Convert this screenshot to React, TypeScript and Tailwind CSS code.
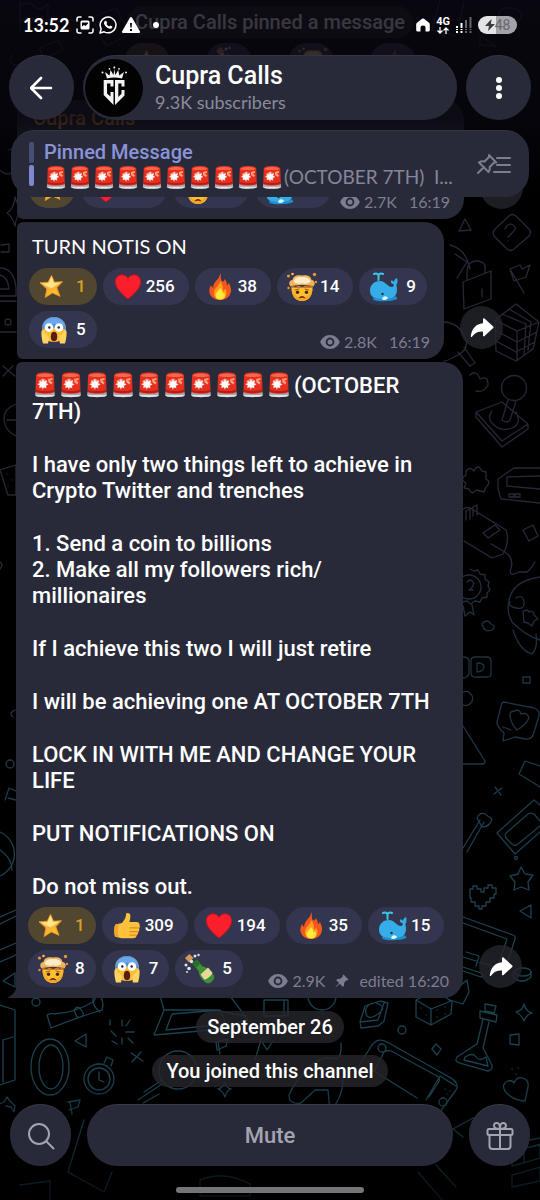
import type { ReactNode } from 'react';

type EmojiName =
  | 'star'
  | 'heart'
  | 'fire'
  | 'mindblown'
  | 'whale'
  | 'scream'
  | 'thumb'
  | 'bottle';

const emojiArt: Record<EmojiName, ReactNode> = {
  star: (
    <>
      <path
        d="M11.5 2.5l3 6.8 8-.6-5.7 6 3.2 8.6-7.6-3.4-7.2 4.6 1.7-8.6L0 9.8l8.2-.6z"
        fill="#f9b233"
        stroke="#e8962a"
        strokeWidth="1"
        strokeLinejoin="round"
      />
      <path d="M11.5 3.5l2.4 6.3 6.6-.2-9 5.6-4.2-1.6-5.6-3.1 6.8-.5z" fill="#ffe58a" />
      <path d="M5.5 22.5l9.5-6.3 3.6 5.8-6.2-3.2z" fill="#ffc21f" />
    </>
  ),
  heart: (
    <path
      d="M14 26C9 22 2 16 1.300 9.500 1 4.500 4.500 1.800 8 1.800c2.600 0 4.800 1.300 6 3.600 1.200-2.300 3.400-3.600 6-3.600 3.500 0 7 2.700 6.700 7.700C26 16 19 22 14 26z"
      fill="#fb1f2b"
      stroke="#c60f22"
      strokeWidth="1"
    />
  ),
  fire: (
    <>
      <path
        d="M14.500 0c1 4-.5 6 1.500 8 1 1 2.500.5 2.500-2 2 2 2.500 4 2.300 6.200 1.200-.3 1.800-1.400 1.900-2.700C25 14 26 17.500 24 21.500c-2 4-6 5.500-10 5.500S5.500 25 4 21c-1.500-4 0-7 1.200-9 .3 1.500.8 2.400 2 2.800C7 8.500 13.500 6.500 14.500 0z"
        fill="#f4561d"
      />
      <path
        d="M14 8c0 4-5 6-6 11-.8 4.500 2.500 7.500 6 7.500s6.500-2.500 6.500-6.500c0-2-.8-3.500-1.500-4.500-.5 1.500-1 2-2 2.200C17.500 14 16 10 14 8z"
        fill="#ff9d1c"
      />
      <path
        d="M14 15c-1 3-4.500 4-4.500 7.500 0 2.500 2 4 4.700 4s4.800-1.500 4.800-4c0-1.500-.7-2.700-1.200-3.300-.2.800-.6 1.200-1.200 1.300.2-2-1.200-4.300-2.600-5.500z"
        fill="#ffe93b"
      />
    </>
  ),
  mindblown: (
    <>
      <path d="M3.500 14c0 9 4 14 10.500 14s10.500-5 10.500-14z" fill="#fcbf2d" />
      <path d="M3.500 15c0 8 4 13 10.500 13s10.500-5 10.500-13c-2 6-6 10-10.500 10S5.500 21 3.500 15z" fill="#f5a727" />
      <path
        d="M2.500 13.500c-3-4 0-6.500 2-6.500C5 3 9 1.500 14 2.500c5-1 9 .5 9.500 4.500 2 0 5 2.500 2 6.500-5-2-18-2-23 0z"
        fill="#f0b45c"
      />
      <path d="M5.500 8c1-3.500 5-4.500 8.500-4 3.500-.5 7.500.5 8.500 4-1 3-4 2-5.500 3-2-1-4-1-6 0-1.500-1-4.500 0-5.500-3z" fill="#fdebc8" />
      <path d="M3.500 12.500l4 1.500 3-1.500 3.500 1.500 4-1.500 3 1 3.500-1V15h-21z" fill="#cc7a2c" />
      <path d="M7 17l4-1M21 17l-4-1" stroke="#a85c1c" strokeWidth="1" strokeLinecap="round" />
      <circle cx="9.500" cy="19.200" r="1.700" fill="#4a2412" />
      <circle cx="18.500" cy="19.200" r="1.700" fill="#4a2412" />
      <path d="M10.500 25.500c1-3.500 6-3.500 7 0-2-1-5-1-7 0z" fill="#6a2b16" />
      <circle cx="0.500" cy="3" r="1.600" fill="#f0922e" />
      <circle cx="4.500" cy="1" r="1.300" fill="#ffc042" />
      <circle cx="26.500" cy="1.500" r="1.700" fill="#f0922e" />
      <circle cx="28" cy="9" r="1.200" fill="#f0922e" />
      <circle cx="0.500" cy="15" r="1.200" fill="#f0922e" />
    </>
  ),
  whale: (
    <>
      <path
        d="M0 18C0 11 5 8 10 8c6 0 7 6 12 6 1.500 0 2-1.500 1.500-3-2-.2-3-1.500-2.500-3.500 1.500 0 2.500.5 3 1.500.2-2 1.500-3.500 3-4 1 3 .5 5.500-.7 7C29 21 24 27 15 27 6 27 0 24 0 18z"
        fill="#35ade6"
      />
      <path d="M3 24c6 3 18 3 23-1l1.500 3c-6 2.500-18 3-24 1z" fill="#1d8fd0" />
      <path d="M12 26.500c1-4 4-4 6-1.500-1 2-4 2.500-6 1.500z" fill="#e8f7ff" />
      <circle cx="12.500" cy="21" r="1.200" fill="#12354d" />
      <path
        d="M8.500 7V3M8.500 3C8.500 .5 6 0 4 1M8.500 3C8.500 .5 11 0 13 1"
        fill="none"
        stroke="#3bc6e8"
        strokeWidth="2"
        strokeLinecap="round"
      />
    </>
  ),
  scream: (
    <>
      <path d="M2 14C2 6 7 1 14 1s12 5 12 13c0 8-5 12-12 12S2 22 2 14z" fill="#fbbf36" />
      <path d="M2 14C2 6 7 1 14 1s12 5 12 13c-3-3-21-3-24 0z" fill="#4e8fe0" />
      <path d="M2.500 11C4 5 8 2 14 2s10 3 11.500 9c-3-4-20-4-23 0z" fill="#6aa8ee" />
      <circle cx="9" cy="11.500" r="4.300" fill="#fff" />
      <circle cx="19" cy="11.500" r="4.300" fill="#fff" />
      <circle cx="9.300" cy="11.500" r="1.200" fill="#33241d" />
      <circle cx="18.700" cy="11.500" r="1.200" fill="#33241d" />
      <ellipse cx="14" cy="20.500" rx="3.200" ry="4.700" fill="#5b1d12" />
      <path d="M1.500 15c2-1 3 0 3.500 3 2 0 4 2 4 5l-1 4.500H3C2 24 1 19 1.500 15z" fill="#ffd262" />
      <path
        d="M26.500 15c-2-1-3 0-3.500 3-2 0-4 2-4 5l1 4.500h5c1-3.500 2-8.500 1.500-12.500z"
        fill="#ffd262"
      />
    </>
  ),
  thumb: (
    <>
      <path
        d="M14.500 1c2.500 0 3.300 2 2.800 4.500L16.500 10h7c2 0 3.300 1.300 3 3 .5 1 .5 2.500-.3 3.500.3 1.300 0 2.700-1 3.500.1 1.200-.4 2.400-1.400 3-.1 2-1.500 3.300-3.800 3.300H8.500L2 24.500C1 20 1 15 2.500 12.500L9 11c2-3 4-5 4-8.500 0-1 .5-1.500 1.500-1.500z"
        fill="#fdc23c"
      />
      <path
        d="M17 15.800h8.500M17 19.700h7.800M17 23.200h6"
        stroke="#dd8e22"
        strokeWidth="1.200"
        strokeLinecap="round"
      />
      <path d="M2 24.500C1 20 1 15 2.500 12.500L6 11.700c-1.500 4-1.500 9.500 0 13.900z" fill="#f2a52b" />
    </>
  ),
  bottle: (
    <>
      <path d="M7 9l4.500-4 4.500 6c4 1 8 4 11 8 2 3 1.500 5-1 7.500s-5 2.500-7 .5c-4-3-6-7-6.500-11z" fill="#3f8f35" />
      <path d="M6 8.500L11 4l3.500 4.500-5 4.500z" fill="#2a6d2b" />
      <path d="M14.500 19.500l7.500-7 4.500 5.200c-1 3-4 5.500-8 7z" fill="#e6d79a" />
      <path d="M-1 3L3.500-1l4 4L3 7.500z" fill="#d79a56" />
      <g fill="#dfe4ea">
        <circle cx="9" cy="1" r="1.500" />
        <circle cx="12.500" cy="0" r="1.200" />
        <circle cx="0" cy="10" r="1.500" />
        <circle cx="3" cy="13.500" r="1.800" />
        <circle cx="1" cy="17" r="1" />
        <circle cx="5.500" cy="6.500" r="1.700" />
      </g>
    </>
  ),
};

const Emoji = ({ name }: { name: EmojiName }) => (
  <svg viewBox="0 0 28 28" className="h-7 w-7 shrink-0 overflow-visible" aria-hidden="true">
    {emojiArt[name]}
  </svg>
);

const Siren = ({ className }: { className: string }) => (
  <svg viewBox="0 0 26 26" className={`inline-block shrink-0 ${className}`} aria-hidden="true">
    <path d="M3.500 20h19l.500 3.200c0 2.500-19.900 2.500-20 0z" fill="#a3a8ad" />
    <path d="M4 23h18v1c-3 1.500-15 1.500-18 0z" fill="#dfe1e2" />
    <path d="M4 4c0-2 2-3.500 9-3.500S22 2 22 4l.5 15.500c0 3-19 3-19 0z" fill="#e5301f" />
    <path d="M5 4c0-1.500 4-2.500 8-2.500S21 2.500 21 4c-3 1.300-13 1.300-16 0z" fill="#f4674c" />
    <path d="M16 7l4.500-1v2l-2.500.5 2.500 2-1 2-3-2z" fill="#ffa184" />
    <path d="M4 17.500c4 2 14 2 18 0v2c-3 2-15 2-18 0z" fill="#bb1a18" />
    <circle cx="11" cy="11.500" r="4.500" fill="#ff9a8a" opacity="0.800" />
    <path
      d="M11 6l.900 3.700 3.300-1.500-1.500 3 3 1.200-3.200 1 1 3-2.700-1.500-.9 2.800-1-2.800-2.900 1.200 1.200-2.800-3-1.100 3-.9-1.100-2.700 2.800 1.300z"
      fill="#fff"
    />
  </svg>
);

const Sirens = ({ className }: { className: string }) => (
  <>
    {Array.from({ length: 10 }, (_, i) => (
      <Siren key={i} className={className} />
    ))}
  </>
);

const EyeIcon = () => (
  <svg viewBox="0 0 20 14" className="h-3.5 w-5 shrink-0" aria-hidden="true">
    <path
      d="M10 0C5 0 1.500 3.500.200 7 1.500 10.500 5 14 10 14s8.500-3.500 9.800-7C18.500 3.500 15 0 10 0zm0 2.600a4.400 4.400 0 110 8.800 4.400 4.400 0 010-8.800z"
      fill="currentColor"
    />
    <circle cx="10" cy="7" r="2.500" fill="currentColor" />
  </svg>
);

const PinIcon = () => (
  <svg viewBox="0 0 14 14" className="mx-1.5 h-3.5 w-3.5 shrink-0" aria-hidden="true">
    <path
      d="M8.500.500l5 5-1.300.9-.7-.2-2.300 2.500-.2 3-1.200 1.100-3.100-3.100L.8 13.300l-.3-.3 3.500-4L1.200 6.100 2.300 5l3-.2L7.800 2.500l-.2-.8z"
      fill="currentColor"
    />
  </svg>
);

interface Reaction {
  emoji: EmojiName;
  count?: number;
  width?: string;
}

const chipPadding = (count?: number) => {
  if (count === undefined) return 'pr-[7px]';
  return count < 10 ? 'gap-2 pr-[11px]' : 'gap-1 pr-3.5';
};

const ReactionChip = ({ emoji, count, width = '' }: Reaction) => (
  <button
    aria-label={count === undefined ? emoji : undefined}
    className={`flex h-[37px] items-center rounded-full pl-[11px] text-[17px] font-medium ${chipPadding(count)} ${width} ${
      emoji === 'star' ? 'bg-[#51462f] text-[#dba126]' : 'bg-[#34364f] text-white'
    }`}
  >
    <Emoji name={emoji} />
    {count}
  </button>
);

const Reactions = ({ items, children }: { items: Reaction[]; children: ReactNode }) => (
  <div className="flex flex-wrap gap-1.5">
    {items.map((item) => (
      <ReactionChip key={item.emoji} {...item} />
    ))}
    <div className="-mb-[3px] ml-auto flex h-[18px] items-center gap-1 self-end font-[Lato,sans-serif] text-base text-[#7c7d90]">
      {children}
    </div>
  </div>
);

const ShareButton = () => (
  <button
    aria-label="Share message"
    className="mb-2.5 flex h-[43px] w-[43px] shrink-0 items-center justify-center rounded-full bg-[#24252d]/80"
  >
    <svg viewBox="0 0 24 20" className="h-5 w-6" aria-hidden="true">
      <path
        d="M13 1.200c0-.8.900-1.200 1.500-.7l8.700 8c.5.500.5 1.100 0 1.600l-8.700 8c-.6.500-1.500.1-1.500-.7v-4C8 13.200 4.500 14.700 2 18.700c-.4.600-1.300.4-1.200-.4C1.500 11.500 5.500 5.800 13 5.200z"
        fill="#fff"
      />
    </svg>
  </button>
);

const Wallpaper = () => (
  <svg
    viewBox="0 0 540 1200"
    preserveAspectRatio="xMidYMid slice"
    className="absolute inset-0 h-full w-full"
    aria-hidden="true"
  >
    <defs>
      <linearGradient id="ink" gradientUnits="userSpaceOnUse" x1="0" y1="0" x2="0" y2="1200">
        <stop offset="0" stopColor="#2b2438" />
        <stop offset="0.400" stopColor="#2a2536" />
        <stop offset="0.550" stopColor="#1f2f40" />
        <stop offset="0.750" stopColor="#1c4150" />
        <stop offset="0.900" stopColor="#1a4150" />
        <stop offset="1" stopColor="#07141a" />
      </linearGradient>
    </defs>
    <g fill="none" stroke="url(#ink)" strokeWidth="1.300" strokeLinejoin="round" strokeLinecap="round">
      {/* top edge */}
      <path d="M20 2v28M20 6q8-6 14 0t14-2v16q-8 5-14 0t-14 2M92 18l24-10 14 26-24 12zM98 22l12-5M440 0l-8 30 24 6 8-34M480 36l16 10-16-1zM500 10q14-6 22 4l-6 14-18-6zM40 48l18-8 5 10-20 9zM12 55a6 6 0 1010 6M8 150q12-4 10 8 10 6-4 12-6 8-14 0" />
      {/* left strip */}
      <path d="M15 197q3 11 9 14-8 3-9 15-3-10-8-13 7-4 8-16zM1 245l8-1v8H1M0 268q14 0 16 20v8H0M0 275q8 2 9 14H0M0 301h16M0 332h16M3 366l12 10M3 376l10-10M16 404q-13 5-12 16t12 16M7 420h9M0 470l16-5v30H8zM0 562q4 3 0 7" />
      <circle cx="8" cy="322" r="3" />
      <path d="M7 474v.1M12 480v.1M8 486v.1M15 710q-7 3-2 7M5 800l4-12 7 3M16 800l-8-2M0 832a24 24 0 010 44M0 850q12 8 12 20M0 917l16-7M0 924l16-8M0 950l16-7M0 962l16-7M3 981l12-8v14z" />
      <circle cx="10" cy="764" r="4" />
      {/* upper right */}
      <path d="M459 231l6-12 6 11zM495 229l14-13q3-3 7 0l13 13q3 3 0 7l-15 13q-3 3-7 0l-13-13q-2-4 1-7zM505 229q3-7 8-4t-1 8l-4 4M508 241v.1M463 282l28-11v28l-27 10zM467 279v-8q1-10 9-10t9 5v7M482 289v8M510 269l10-4 2 4 8-4-4 12-12 4zM510 269l14 24M495 320l21-16 23 18-6 27-17 12-20-10zM495 320l22 11 22-9M517 331v30M502 314l24 10-2 31M509 309l22 13-3 28M495 330l22 12 20-10M496 341l20 11 19-10M443 322q14 0 21 13t-6 20-14 6M458 352l12 14 5-3-11-16M470 375q6-6 10 4 8-4 8 6-4 8-12 6M450 245q16 4 20 24M455 254l12 8-10 16" />
      <circle cx="514" cy="388" r="12.500" />
      <path d="M508 400l-6 20q5 4 8 0l6-19M476 412l26-10 26 22-26 17zM476 412v5l26 30 26-18v-5M492 411q-6 7 2 14t18 3 4-16M466 471q4-5 8 0 4-8 8 0l4 1v7q6 3 0 8l-2 5-8-2q-4 6-7-1l-5-1 2-5q-7-4 0-8zM540 468h-26l-16 11v10l3 10 39 4M507 477l33-1M507 477v9l33 3M509 494h5v3h-5zM515 494h5v3h-5zM463 509q5-3 9 0l34 21q4 12-3 24l-11 4-28-17M466 520v-9l4-2v10M473 516v-9l4-2v10M483 533l12-8 5 5-12 8zM491 544l14 8q9 6 6 16t8 4l8 0q4-3 8-10M523 530l10-5 5 11-9 5z" />
      <path d="M470 569l4 2 4-1 2 4 5 1v4l4 3-1 4 2 4-3 3v4l-5 1-2 4-5-1-4 3-4-3-5 1M463 606l2 10 5-4 4 3-2-10" />
      <circle cx="469" cy="587" r="12" />
      <path d="M467 582q4-4 6 0t-4 8h4M540 577q-28 4-31 24-3 10 3 21 14 14 28 18M516 598q7-4 8 4t-8 6-6-6M523 612q4-4 6 0 5-2 5 3l4 4-4 2-2 5-4-3-4-1zM482 624q5-6 9 0 6 2 1 6-8 3-10-6z" />
      {/* lower right */}
      <path d="M513 630q6 20 19 24 6-6 4-20M475 657h12q4 0 4 4v12q0 4-4 4h-12q-4 0-4-4v-12q0-4 4-4zM477 663v9q7-1 7-5t-7-4M463 657q5 0 6 3v14q-2 4-6 4M463 692a7 7 0 110 13M463 726l22 35q0 3-3 3h-19M523 677h7v6h-7zM504 702l30 6q6 2 5 8l-6 19q-2 5-8 4l-10-2-12 4 1-8q-7-6-7-11l4-16q1-4 3-4zM511 730l-8-3M510 716q-1-5 5-5 4-3 6 3 6-2 8 4-3 7-12 12-6-6-7-14zM525 761l-6 13 21 13M525 761l15 5M495 787l6 8M494 794l8-6M497 833l37-33 6 5M497 833l18 21 25-22M506 833l22-19q4-2 7 1l5 6M506 833q-2 3 1 6l5 5q3 3 6 0l22-18M463 848l17-28M467 852l17-30M477 818q2-6 8-4l7 5q-2 8-10 8zM521 867l4 7 8 1-5 7 1 8-8-3-7 3 1-8-5-6 8-2zM470 893v-4h3v-3h4v3h4v3h3v-4h4v-3h4v3h4v6h-2v4h-4v4h-4v4h-4v3h-3v-3h-4v-4h-4v-4h-1zM520 911l11-6v13zM463 917l50 18q3 1 2 4l-9 28q-1 3-4 2l-39-12M463 923l44 16-8 24M463 967l18 6q4 3 0 4l-18-6M466 952l13 4-3 10" />
      <circle cx="516" cy="858" r="1.500" />
      <ellipse cx="523" cy="972" rx="8" ry="4" />
      <path d="M513 972v5q9 8 18 0v-5M416 1000l20-10 16 12-1 12-20 11-15-8zM416 1000l15 9 20-8M431 1009v16M455 990l12-10 2 12-6 12-13-4M421 1008v.1M426 1015v.1M437 1010h.1M445 1007h.1M437 1017h.1M445 1014h.1M365 1006l15-5 8 2-4 18-6 5-17 2-1-6zM360 1022l18-2 6-17M372 1003q-8 4-6 11t12 0-2-11M485 1004l11 2-2 7-9-2zM480 1011l17 4-1 7-16-4zM483 1019l-6 25-20 13q-3 5 3 6l28 8q5-1 4-6l-9-17 6-26M465 1057q8-5 11 0t10 0l2 9-24-6zM524 1004q2 8 8 9-6 2-8 8-2-6-8-9 6-1 8-8zM510 1035l9-1v11l-9-1zM436 1044l5 5-4 6-5-6zM512 1069h.1M518 1068h.1M516 1074h.1M505 1091q-4-7 3-10 5-1 6 2 3-7 9-5t5 9l-3 14q-12 0-20-10zM372 1045q6-8 15-3l64 36q9 6 5 12l-16 22M372 1045l-14 22M384 1052q5-3 9 0l44 24q4 3 1 7l-9 14M384 1052l-10 19 43 27M456 1086l-16-10-14 24" />
      <circle cx="402" cy="1030" r="4" />
      <circle cx="382" cy="1048" r="4" />
      <circle cx="443" cy="1102" r="4" />
      <path d="M445 1089h.1M450 1091h.1M447 1094h.1M341 1043q1 12-4 16-16-4-28 8-14 14-20 28 0 10 12 8l14-13h13l2 22M331 1110q14-15 12-40M453 1129l20-11 22 12M453 1129l10 8M540 1138l-15 3v7l15-3M512 1152l28-8v14l-28 8zM512 1175l28-8v14l-28 6zM524 1150v13M418 1172l24 28M436 1165l20 22" />
      {/* lower left */}
      <path d="M47 1015q5-2 7-1 20-1 39-12 6-9 1-6M47 1015l4 13q20-8 38-14l13-4q3-10-5-18M93 998q-1 8 7 14M74 1010q4-6 8 1t-5 6zM110 1020v5M122 1020v6M111 1031l5 5M122 1038v6M130 1020l-4 6M134 1032h-8M133 1043l-5-5M117 1044l-5-3M75 1041l11-7v13zM131 1053l12 8M132 1062l9-10M0 1005l15 5v70l-15 5M3 1040l10-3M3 1040v42M160 996l4 14-10 25 58-5 36-10-18-24M164 1010l50 0 32 6M172 1014l-6 16 60-6-6-14zM144 1092l18-12M138 1100l24-16M143 1103l16-9M6 1106l5 1 3 5 1-6-5-5-3-4-3 5-5 2M68 1102l12-2-2 7-9 3M70 1102l2 12" />
      <ellipse cx="50" cy="1067" rx="19" ry="28" />
      <ellipse cx="51" cy="1067" rx="12" ry="22" />
      <circle cx="36" cy="1002" r="4" />
      <circle cx="99" cy="1079" r="15" />
      <circle cx="99" cy="1079" r="11" />
      <path d="M99 1072v8l5 2M104 1063l3-6 6 3-2 6M216 1042l12-3-2 7-9 4zM218 1042l2 12M225 1082q1 6 6 7-5 2-6 8-2-6-7-8 5-1 7-7zM255 1060l6-20 6 10 6-9M284 1000v15M264 1000h24v16h-24zM84 1120l-16 52 36 20 8-20M20 1185l30-4v19M200 1180q24-10 50 4v12h-50z" />
      <circle cx="178" cy="1070" r="19" />
      <circle cx="322" cy="996" r="14" />
    </g>
  </svg>
);

const Header = () => (
  <header className="sticky top-0 z-10 bg-linear-to-b from-[#0a0812]/80 via-[#07060d]/85 via-60% to-transparent px-[11px] font-[Roboto,sans-serif]">
    <div className="flex h-[50px] items-center justify-between pr-3 pl-3 text-white">
      <div className="flex items-center gap-[5px]">
        <span className="mr-0.5 font-[Lato,sans-serif] text-lg font-bold">13:52</span>
        <svg viewBox="0 0 18 18" className="h-[18px] w-[18px]" aria-hidden="true">
          <path
            d="M1 5V3q0-2 2-2h2M13 1h2q2 0 2 2v2M17 13v2q0 2-2 2h-2M5 17H3q-2 0-2-2v-2"
            fill="none"
            stroke="currentColor"
            strokeWidth="1.500"
            strokeLinecap="round"
          />
          <path
            fillRule="evenodd"
            d="M6 4.500h6q1.500 0 1.500 1.500v6q0 1.500-1.500 1.500H6q-1.500 0-1.500-1.500V6q0-1.500 1.500-1.500zM6 6.500v4l2-1.500 1.500 1 2.500-2.500v-1z"
            fill="currentColor"
          />
        </svg>
        <svg viewBox="0 0 18 18" className="h-[18px] w-[18px]" aria-hidden="true">
          <path
            d="M1 17l1.200-4.200A7.900 7.900 0 119.200 16.800a8 8 0 01-4-1z"
            fill="none"
            stroke="currentColor"
            strokeWidth="1.500"
            strokeLinejoin="round"
          />
          <path
            d="M6.300 4.800l1 .1.900 2-.8 1.200q1 1.800 2.900 2.500l1-1.100 2 .9v1q-.7 1.500-2.500 1.400-4.600-1.200-5.900-5.600 0-1.600 1.400-2.400z"
            fill="currentColor"
          />
        </svg>
        <svg viewBox="0 0 18 16" className="h-4 w-[18px]" aria-hidden="true">
          <path
            fillRule="evenodd"
            d="M8 .600q1-1 2 0l8 14q.3 1.200-1 1.400H1Q-.3 15.800 0 14.600zM8 6l.3 4.500h1.400L10 6zM8 12v2h2v-2z"
            fill="currentColor"
          />
        </svg>
        <span className="ml-2 h-1.5 w-1.5 rounded-full bg-white" />
      </div>
      <div className="flex items-center gap-1.5">
        <svg viewBox="0 0 14 14" className="h-3.5 w-3.5" aria-hidden="true">
          <path
            d="M6 .800q1-.8 2 0l5 4q.8.700.8 1.500V12q0 1.500-1.500 1.500H9.500V9.500Q9.500 7.500 7 7.500T4.500 9.500v4H1.700Q.2 13.500.2 12V6.300q0-.8.8-1.500z"
            fill="currentColor"
          />
        </svg>
        <div className="flex flex-col items-center">
          <span className="text-[11px] leading-[10px] font-bold">4G</span>
          <svg
            viewBox="0 0 12 7"
            className="h-[7px] w-3"
            fill="none"
            stroke="currentColor"
            strokeWidth="1.300"
            aria-hidden="true"
          >
            <path d="M3 0v6M.500 3.500L3 6l2.500-2.500M9 7V1M6.500 3.500L9 1l2.500 2.500" />
          </svg>
        </div>
        <svg viewBox="0 0 16 16" className="h-4 w-4" aria-hidden="true">
          <path d="M0 9h2v2H0zM0 12h2v1H0zM0 14h2v2H0zM4.500 6h2v5h-2zM4.500 12h2v1h-2zM4.500 14h2v2h-2z" fill="#fff" />
          <path
            d="M9 3h2v8H9zM9 12h2v1H9zM9 14h2v2H9zM13.500 0h2v11h-2zM13.500 12h2v1h-2zM13.500 14h2v2h-2z"
            fill="#66646c"
          />
        </svg>
        <div className="flex h-[18px] w-[39px] items-center justify-center rounded-full bg-linear-to-r from-[#e4e4e6] from-45% to-[#a3a2a7] to-45% text-sm text-[#68676d]">
          <svg viewBox="0 0 10 12" className="h-3 w-2.5" aria-hidden="true">
            <path d="M6.500 0L0 7h4L3 12l7-7H6z" fill="#3b3a40" />
          </svg>
          48
        </div>
      </div>
    </div>

    <div className="mt-[5px] flex gap-[9px]">
      <button
        aria-label="Back"
        className="-ml-0.5 flex h-[65px] w-[65px] shrink-0 items-center justify-center rounded-full border-t border-[#34353f] bg-[#292a39]"
      >
        <svg
          viewBox="0 0 24 24"
          className="h-6 w-6"
          fill="none"
          stroke="#fff"
          strokeWidth="2.600"
          strokeLinecap="round"
          strokeLinejoin="round"
          aria-hidden="true"
        >
          <path d="M21 12H1M11 2L1 12l10 10" />
        </svg>
      </button>
      <div className="flex h-[65px] min-w-0 flex-1 items-center gap-3 rounded-full border-t border-[#34353f] bg-[#292a39] pl-0.5">
        <svg viewBox="0 0 58 58" className="h-[58px] w-[58px] shrink-0" aria-hidden="true">
          <circle cx="29" cy="29" r="29" fill="#020203" />
          <g fill="#f2f2f2">
            <path d="M22 19.500L20 13l4.500 3.500L25.500 11l3 5 .8-6 1 6 3-5 1 5.500L39 13l-2 6.500q-8-2-15 0z" />
            <circle cx="17.500" cy="13.500" r="1" />
            <circle cx="24.500" cy="9.800" r=".9" />
            <circle cx="29.300" cy="8.500" r="1" />
            <circle cx="34" cy="9.800" r=".9" />
            <circle cx="41" cy="13.500" r="1" />
            <path d="M18.700 21h9.800v6.500h-3V24.500H22v10l3.500 3V33h3v13l-9.800-10zM30 21h9.500v6.500h-3V24.500h-3.200V38l3.200-3.300V31h3v5.500L30 46z" />
          </g>
        </svg>
        <div className="min-w-0">
          <h1 className="text-[25px] leading-7 font-medium text-white">Cupra Calls</h1>
          <p className="font-[Lato,sans-serif] text-lg leading-6 text-[#8a8b9b]">9.3K subscribers</p>
        </div>
      </div>
      <button
        aria-label="More options"
        className="-mr-0.5 flex h-[65px] w-[65px] shrink-0 flex-col items-center justify-center gap-0.5 rounded-full border-t border-[#34353f] bg-[#292a39]"
      >
        <span className="h-1.5 w-1.5 rounded-full bg-white" />
        <span className="h-1.5 w-1.5 rounded-full bg-white" />
        <span className="h-1.5 w-1.5 rounded-full bg-white" />
      </button>
    </div>

    <div className="mt-2.5 flex h-[67px] items-center gap-2 rounded-3xl border-t border-[#34353f] bg-[#292a39] pr-[18px] pl-[18px]">
      <div className="flex flex-col gap-0.5">
        <span className="h-[21px] w-[5px] rounded-xs bg-[#484d75]" />
        <span className="h-[21px] w-[5px] rounded-xs bg-[#7e87cf]" />
      </div>
      <div className="min-w-0 flex-1 pt-0.5">
        <p className="pl-0.5 text-[20px] leading-6 font-medium text-[#8994d8]">Pinned Message</p>
        <p className="flex items-center pl-0.5 font-[Lato,sans-serif] text-[19px] leading-[26px] whitespace-pre text-[#85869a]">
          <Sirens className="h-[25px] w-6" />
          (OCTOBER 7TH)  I...
        </p>
      </div>
      <button aria-label="Pinned messages" className="shrink-0">
        <svg
          viewBox="0 0 34 22"
          className="h-[22px] w-[34px]"
          fill="none"
          stroke="#7c7d8e"
          strokeWidth="2"
          strokeLinecap="round"
          strokeLinejoin="round"
          aria-hidden="true"
        >
          <path d="M1 20l6-6M2 9.500L11.500 19q1.500-1 1.200-5l4.500-4.500h2L12 2v2L7.500 8.500Q4 8 2 9.500zM20 5h13M20 12h13M17 19h16" />
        </svg>
      </button>
    </div>
  </header>
);

const bubble = 'min-w-0 flex-1 rounded-md rounded-r-[20px] bg-[#292a39] pr-3.5 pb-[11px] pl-3';

const Feed = () => (
  <main className="relative -mt-[197px] flex flex-col pt-1.5 font-[Roboto,sans-serif]">
    <p className="self-center rounded-full bg-white/10 px-2 text-[20px] leading-8 font-medium text-white">
      Cupra Calls pinned a message
    </p>
    <div className="mt-[5px] mb-5 flex h-[37px] justify-center gap-9">
      <ReactionChip emoji="star" />
      <ReactionChip emoji="bottle" />
      <ReactionChip emoji="mindblown" />
      <ReactionChip emoji="fire" />
    </div>

    <div className="flex items-end gap-4 px-[17px]">
      <article className={`${bubble} max-w-[448px]`}>
        <p className="pt-1 pb-[39px] pl-1 text-[20px] leading-7 font-medium text-[#e08a3c]">Cupra Calls</p>
        <Reactions
          items={[
            { emoji: 'star' },
            { emoji: 'heart', width: 'w-[86px]' },
            { emoji: 'mindblown', width: 'w-[76px]' },
            { emoji: 'whale', width: 'w-[76px]' },
          ]}
        >
          <EyeIcon />
          <span className="pr-2">2.7K</span>16:19
        </Reactions>
      </article>
      <ShareButton />
    </div>

    <div className="mt-[3px] flex items-end gap-4 px-[17px]">
      <article className={`${bubble} max-w-[427px] pt-[11px]`}>
        <p className="mb-[9px] pl-[3px] font-[Lato,sans-serif] text-[20px] leading-[26px] text-white">
          TURN NOTIS ON
        </p>
        <Reactions
          items={[
            { emoji: 'star', count: 1 },
            { emoji: 'heart', count: 256 },
            { emoji: 'fire', count: 38 },
            { emoji: 'mindblown', count: 14 },
            { emoji: 'whale', count: 9 },
            { emoji: 'scream', count: 5 },
          ]}
        >
          <EyeIcon />
          <span className="pr-2">2.8K</span>16:19
        </Reactions>
      </article>
      <ShareButton />
    </div>

    <div className="mt-[3px] flex items-end gap-4 px-4">
      <article className={`${bubble} relative max-w-[447px] rounded-bl-none pt-[11px]`}>
        <svg viewBox="0 0 9 14" className="absolute bottom-0 -left-2 h-3.5 w-[9px]" aria-hidden="true">
          <path d="M9 0q-1 10-9 13.500V14h9z" fill="#292a39" />
        </svg>
        <div className="mb-[7px] flex flex-col gap-[27px] pl-1 text-[22px] leading-[26px] font-medium text-white">
          <p>
            <Sirens className="-mt-1 h-[26px] w-[26px]" />
            <span className="pl-0.5">(OCTOBER</span>
            <br />
            7TH)
          </p>
          <p>
            I have only two things left to achieve in
            <br />
            Crypto Twitter and trenches
          </p>
          <p>
            1. Send a coin to billions
            <br />
            2. Make all my followers rich/
            <br />
            millionaires
          </p>
          <p>If I achieve this two I will just retire</p>
          <p>I will be achieving one AT OCTOBER 7TH</p>
          <p>
            LOCK IN WITH ME AND CHANGE YOUR
            <br />
            LIFE
          </p>
          <p>PUT NOTIFICATIONS ON</p>
          <p>Do not miss out.</p>
        </div>
        <Reactions
          items={[
            { emoji: 'star', count: 1 },
            { emoji: 'thumb', count: 309 },
            { emoji: 'heart', count: 194 },
            { emoji: 'fire', count: 35 },
            { emoji: 'whale', count: 15 },
            { emoji: 'mindblown', count: 8 },
            { emoji: 'scream', count: 7 },
            { emoji: 'bottle', count: 5 },
          ]}
        >
          <EyeIcon />
          2.9K
          <PinIcon />
          edited 16:20
        </Reactions>
      </article>
      <ShareButton />
    </div>

    <div className="mt-[13px] flex flex-col items-center gap-3 text-[20px] leading-8 font-medium text-white">
      <p className="rounded-full bg-[#25262c]/80 px-[11px]">September 26</p>
      <p className="rounded-full bg-[#25262c]/80 px-3.5">You joined this channel</p>
    </div>
  </main>
);

const Footer = () => (
  <footer className="relative mt-[17px] px-2.5 pb-[7px] font-[Roboto,sans-serif]">
    <div className="flex gap-4">
      <button
        aria-label="Search"
        className="flex h-[62px] w-[61px] shrink-0 items-center justify-center rounded-full border-t border-[#3a3b47] bg-[#292a39]"
      >
        <svg
          viewBox="0 0 28 28"
          className="h-7 w-7"
          fill="none"
          stroke="#a3a4b0"
          strokeWidth="2"
          strokeLinecap="round"
          aria-hidden="true"
        >
          <circle cx="12" cy="12" r="10" />
          <path d="M19.500 19.500l7 7" />
        </svg>
      </button>
      <button className="h-[62px] flex-1 rounded-full border-t border-[#3a3b47] bg-[#292a39] text-[22px] font-medium text-[#a3a4b0]">
        Mute
      </button>
      <button
        aria-label="Send a gift"
        className="flex h-[62px] w-[61px] shrink-0 items-center justify-center rounded-full border-t border-[#3a3b47] bg-[#292a39]"
      >
        <svg
          viewBox="0 0 28 30"
          className="h-[30px] w-7"
          fill="none"
          stroke="#a3a4b0"
          strokeWidth="2"
          strokeLinejoin="round"
          aria-hidden="true"
        >
          <rect x="1.500" y="8" width="25" height="6" rx="1.500" />
          <path d="M3.500 14v11q0 3 3 3h15q3 0 3-3V14M14 8v20M14 8q-6 0-6-3.200T11 2q3 0 3 6 0-6 3-6t3 2.800T14 8z" />
        </svg>
      </button>
    </div>
    <div className="mx-auto mt-[21px] h-1.5 w-[188px] rounded-full bg-[#747578]" />
  </footer>
);

export default function App() {
  return (
    <div className="relative isolate min-h-screen bg-black">
      <Wallpaper />
      <Header />
      <Feed />
      <Footer />
    </div>
  );
}
